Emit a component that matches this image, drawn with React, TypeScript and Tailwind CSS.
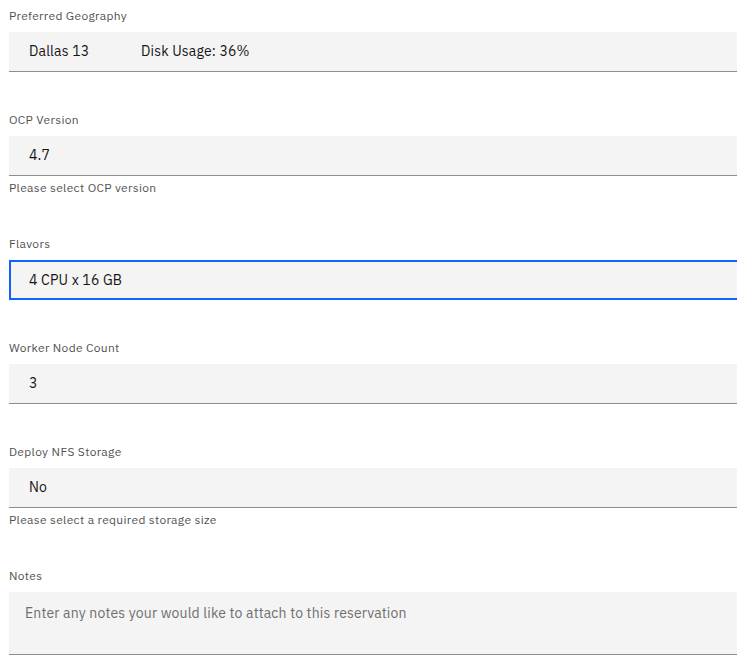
const font = "font-['IBM_Plex_Sans','Open_Sans','Noto_Sans',sans-serif]";

type Field = {
  label: string;
  value: string;
  extra?: string;
  helper?: string;
  focused?: boolean;
};

const fields: Field[] = [
  { label: "Preferred Geography", value: "Dallas 13", extra: "Disk Usage: 36%" },
  { label: "OCP Version", value: "4.7", helper: "Please select OCP version" },
  { label: "Flavors", value: "4 CPU x 16 GB", focused: true },
  { label: "Worker Node Count", value: "3" },
  {
    label: "Deploy NFS Storage",
    value: "No",
    helper: "Please select a required storage size",
  },
];

function Label({ children }: { children: string }) {
  return (
    <div className="mb-2 h-4 text-[12px] leading-4 tracking-[0.32px] text-[#525252]">
      {children}
    </div>
  );
}

function SelectField({ field }: { field: Field }) {
  return (
    <div className="mb-10">
      <Label>{field.label}</Label>
      <div
        className={
          field.focused
            ? "flex h-10 w-[760px] items-center border-2 border-[#0f62fe] bg-[#f4f4f4] pl-[18px]"
            : "flex h-10 w-[760px] items-center border-b border-[#8d8d8d] bg-[#f4f4f4] pl-5"
        }
      >
        <span className="w-[112px] text-[14px] tracking-[0.16px] text-[#161616]">
          {field.value}
        </span>
        {field.extra && (
          <span className="text-[14px] tracking-[0.16px] text-[#161616]">
            {field.extra}
          </span>
        )}
      </div>
      {field.helper && (
        <div className="mt-1 h-4 text-[12px] leading-4 tracking-[0.32px] text-[#525252]">
          {field.helper}
        </div>
      )}
    </div>
  );
}

export default function App() {
  return (
    <main className={`h-[662px] w-[737px] overflow-hidden bg-white pl-[9px] pt-2 ${font}`}>
      {fields.map((f) => (
        <SelectField key={f.label} field={f} />
      ))}
      <div>
        <Label>Notes</Label>
        <div className="h-[63px] w-[760px] border-b border-[#8d8d8d] bg-[#f4f4f4] px-4 pt-[11px] text-[14px] leading-5 tracking-[0.16px] text-[#6f6f6f]">
          Enter any notes your would like to attach to this reservation
        </div>
      </div>
    </main>
  );
}
